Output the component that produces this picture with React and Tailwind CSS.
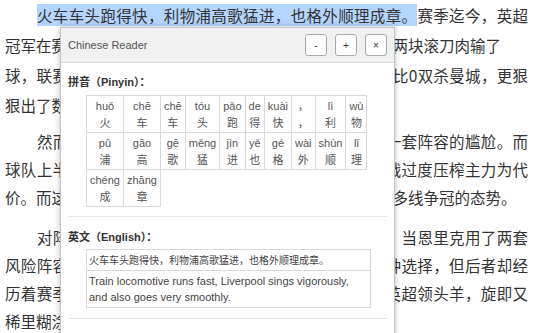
const CJK = { fontFamily: '"Noto Sans CJK SC", "Liberation Sans", sans-serif' }
const UI = { fontFamily: '"Liberation Sans", "Noto Sans CJK SC", sans-serif' }

// each paragraph is written line by line so the parts outside the popup land where they should
const PARAGRAPHS = [
  {
    cls: 'leading-[30px]',
    lines: [
      { text: null, justify: true, indent: true },
      { text: '冠军在赛季初接连遭遇意外，先后被诺维奇和诺丁汉森林两块滚刀肉输了', justify: false },
      { text: '球，联赛排名跌出了前四，但随后迅速找回状态，先以2比0双杀曼城，更狠', justify: true },
      { text: '狠出了数次大比分胜利。', justify: false }
    ]
  },
  {
    cls: 'leading-[28px] mt-[7px]',
    lines: [
      { text: '然而，曼城的问题在于瓜迪奥拉始终摆脱不了只有一套阵容的尴尬。而', justify: true, indent: true },
      { text: '球队上半赛季高歌猛进的连胜，某种程度上是以连续作战过度压榨主力为代', justify: true },
      { text: '价。而这也让他们在赛季后半程体能捉襟见肘，难以维持多线争冠的态势。', justify: false }
    ]
  },
  {
    cls: 'leading-[28px] mt-[12px]',
    lines: [
      { text: '对阵巴黎圣日耳曼的两回合较量中，面对相同困境，当恩里克用了两套', justify: true, indent: true },
      { text: '风险阵容，而斯洛特则在同样的局面之下做出了另外一种选择，但后者却经', justify: true },
      { text: '历着赛季最为艰难的一周，先是在足总杯出局后丢掉了英超领头羊，旋即又', justify: true },
      { text: '稀里糊涂地输掉了联赛杯决赛。', justify: false }
    ]
  }
]

const ROWS = [
  [['huǒ', '火'], ['chē', '车'], ['chē', '车'], ['tóu', '头'], ['pǎo', '跑'], ['de', '得'], ['kuài', '快'], ['，', '，'], ['lì', '利'], ['wù', '物']],
  [['pǔ', '浦'], ['gāo', '高'], ['gē', '歌'], ['měng', '猛'], ['jìn', '进'], ['yě', '也'], ['gé', '格'], ['wài', '外'], ['shùn', '顺'], ['lǐ', '理']],
  [['chéng', '成'], ['zhāng', '章']]
]

function Line({ line }) {
  return (
    <div className={`whitespace-nowrap ${line.justify ? '[text-align-last:justify] text-justify' : ''} ${line.indent ? 'pl-[32px]' : ''}`}>
      {line.text === null ? (
        <>
          <span className="bg-[#b4d5fe]">火车车头跑得快，利物浦高歌猛进，也格外顺理成章。</span>
          赛季迄今，英超
        </>
      ) : line.text}
    </div>
  )
}

function ReaderPopup() {
  return (
    <div
      className="absolute left-[60px] top-[27px] w-[335px] h-[330px] bg-white border border-[#c4c4c4] shadow-[0_0_6px_rgba(0,0,0,0.25)]"
      style={UI}
    >
      <div className="flex items-center justify-between h-[35px] pl-[7px] pr-[7px] bg-[#f1f1f1] border-b border-[#d6d6d6]">
        <span className="text-[11px] text-[#555]">Chinese Reader</span>
        <div className="flex gap-[8px]">
          {['-', '+', '×'].map(b => (
            <button
              key={b}
              className="w-[22px] h-[22px] flex items-center justify-center bg-white border border-[#a9a9a9] rounded-[3px] text-[10px] text-[#333]"
            >
              {b}
            </button>
          ))}
        </div>
      </div>

      <div className="px-[7px] pt-[11px]">
        <div className="text-[11px] leading-[16px] font-bold text-[#333]">拼音（Pinyin）：</div>
        <table className="mt-[5px] ml-[18px] border-collapse text-[11px] text-[#555]">
          <tbody>
            {ROWS.map((row, i) => (
              <tr key={i}>
                {row.map(([py, hz], j) => (
                  <td key={j} className="border border-[#d9d9d9] px-[3px] py-[2px] text-center align-top">
                    <div className="leading-[16px]">{py}</div>
                    <div className="leading-[16px]" style={CJK}>{hz}</div>
                  </td>
                ))}
              </tr>
            ))}
          </tbody>
        </table>

        <div className="mt-[9px] border-t border-[#e6e6e6]" />

        <div className="pt-[12px] text-[11px] leading-[16px] font-bold text-[#333]">英文（English）：</div>
        <div className="mt-[4px] ml-[18px] w-[285px] border border-[#d9d9d9] text-[#444]">
          <div className="px-[2px] py-[2px] text-[10px] leading-[16px] border-b border-[#d9d9d9]" style={CJK}>
            火车车头跑得快，利物浦高歌猛进，也格外顺理成章。
          </div>
          <div className="px-[2px] py-[2px] text-[11px] leading-[16px]">
            Train locomotive runs fast, Liverpool sings vigorously, and also goes very smoothly.
          </div>
        </div>

        <div className="mt-[10px] border-t border-[#e6e6e6]" />
      </div>
    </div>
  )
}

export default function App() {
  return (
    <div className="relative w-[533px] h-[333px] overflow-hidden bg-white">
      <div className="px-[5px] text-[15.5px] text-[#333]" style={CJK}>
        {PARAGRAPHS.map((p, i) => (
          <div key={i} className={p.cls}>
            {p.lines.map((line, j) => <Line key={j} line={line} />)}
          </div>
        ))}
      </div>
      <ReaderPopup />
    </div>
  )
}
